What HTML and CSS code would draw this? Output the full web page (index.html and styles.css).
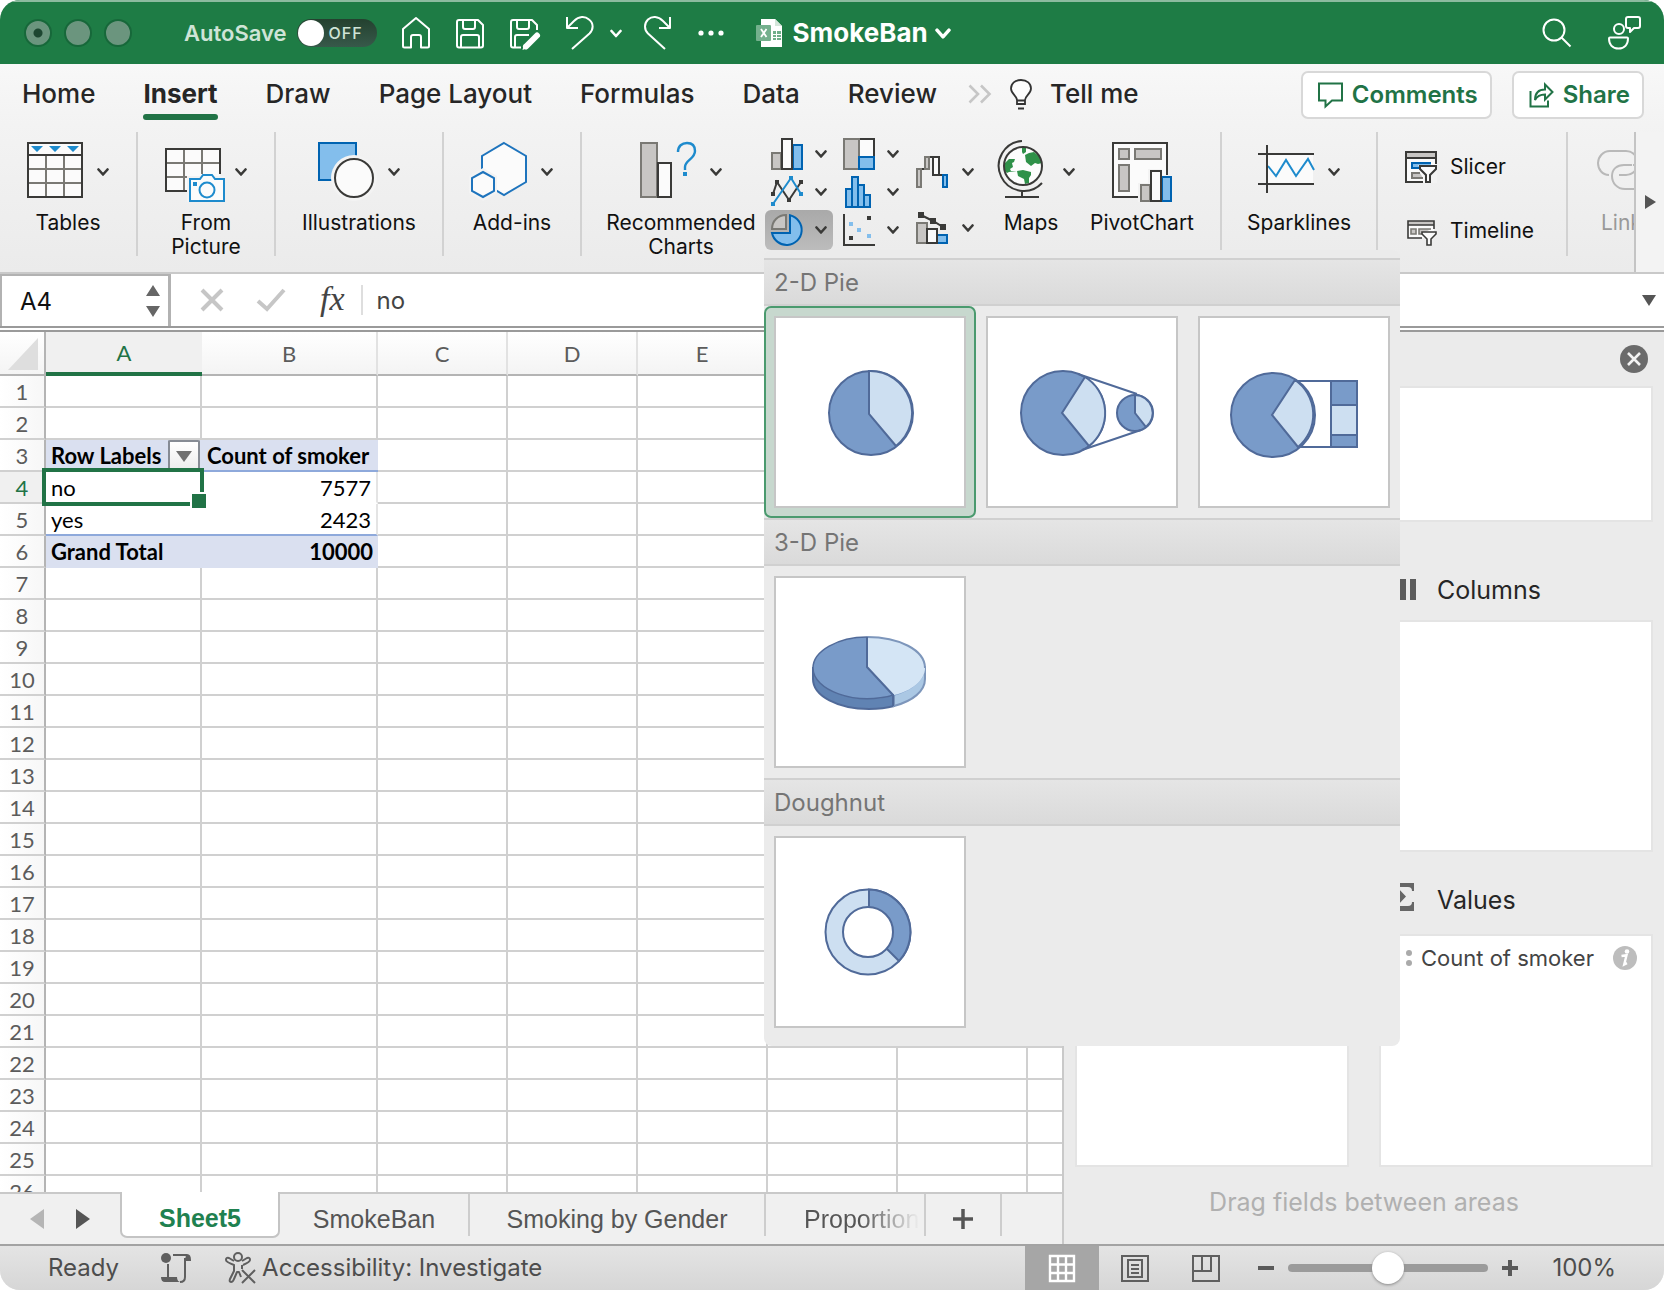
FILE: index.html
```html
<!DOCTYPE html>
<html lang="en">
<head>
<meta charset="utf-8">
<meta name="viewport" content="width=device-width, initial-scale=1">
<title>SmokeBan</title>
<link rel="stylesheet" href="styles.css">
</head>
<body>
<svg class="defs" aria-hidden="true">
  <symbol id="chev" viewBox="0 0 12 8"><path d="M1.500 1.500 6 6.500l4.500-5" fill="none" stroke="currentColor" stroke-width="2.600" stroke-linecap="round" stroke-linejoin="round"/></symbol>
</svg>
<div class="window">
  <header class="titlebar">
    <div class="lights"><span class="light light-edited"></span><span class="light"></span><span class="light"></span></div>
    <label class="autosave">AutoSave
      <span class="switch"><input type="checkbox" role="switch"><span class="switch-text">OFF</span></span>
    </label>
    <div class="quick">
      <button aria-label="Home"><svg width="28" height="32" viewBox="0 0 28 32"><path d="M1 29V12L14 1l13 11v17a1.500 1.500 0 0 1-1.500 1.500H19V20q0-2-2-2h-6q-2 0-2 2v10.500H2.500A1.500 1.500 0 0 1 1 29z"/></svg></button>
      <button aria-label="Save"><svg width="28" height="32" viewBox="0 0 28 32"><path d="M3 3h19l5 5v20.500q0 2-2 2H3q-2 0-2-2V5q0-2 2-2zM7 3v7q0 2 2 2h8q2 0 2-2V3M5 30V20q0-2 2-2h14q2 0 2 2v10"/></svg></button>
      <button aria-label="Save a copy"><svg width="30" height="32" viewBox="0 0 30 32"><path d="M11 30.500H3q-2 0-2-2V5q0-2 2-2h19l5 5v5M7 3v7q0 2 2 2h8q2 0 2-2V3M5 30V20q0-2 2-2h12"/><path d="M16 29.500 27 18.500" stroke-width="6" stroke-linecap="round"/><path d="M12.500 33l1.500-6 4 4z" fill="#fff" stroke="none"/></svg></button>
      <span class="undo">
        <button aria-label="Undo"><svg width="28" height="34" viewBox="0 0 28 34"><path d="M1 1v11h11M1.500 11.500 8 5C13 0 19 0 23 3.500c5 4 4.500 10 .500 14L6 33"/></svg></button>
        <button aria-label="Undo history"><svg class="chev" width="12" height="9"><use href="#chev"/></svg></button>
      </span>
      <button aria-label="Redo"><svg width="28" height="34" viewBox="0 0 28 34"><path d="M26 1v11H15M25.500 11.500 19 5C14 0 8 0 4 3.500c-4 4-4 10 0 14L21 33"/></svg></button>
      <button aria-label="More"><svg width="26" height="6" viewBox="0 0 26 6"><g fill="#fff" stroke="none"><circle cx="3" cy="3" r="2.600"/><circle cx="13" cy="3" r="2.600"/><circle cx="23" cy="3" r="2.600"/></g></svg></button>
    </div>
    <button class="doc">
      <svg width="27" height="30" viewBox="0 0 27 30"><path d="M5 1h14l7 7v21H5z" fill="#fff"/><path d="M19 1v7h7z" fill="#d4e6da"/><path d="M17 13h3v3h-3zm4 0h4v3h-4zm-4 4h3v2h-3zm4 0h4v2h-4zm-4 3h3v2h-3zm4 0h4v2h-4z" fill="#6fae8a"/><rect y="7" width="15" height="16" rx="1" fill="#74b08d"/><path d="m5 11 5.500 8M10.500 11 5 19" stroke="#fff" stroke-width="1.800"/></svg>
      <span>SmokeBan</span>
      <svg class="chev" width="16" height="11"><use href="#chev"/></svg>
    </button>
    <div class="title-tools">
      <button aria-label="Search"><svg width="30" height="30" viewBox="0 0 30 30"><circle cx="12" cy="12" r="10.500"/><path d="m19.500 19.500 9 9"/></svg></button>
      <button aria-label="Feedback"><svg width="34" height="34" viewBox="0 0 34 34"><circle cx="11" cy="13" r="5"/><path d="M1 22.500q0-1 1-1h17q1 0 1 1c0 6-3.500 10-9.500 10S1 28.500 1 22.500zM20 1h10q2 0 2 2v7q0 2-2 2h-4l-4 4v-4h-2q-2 0-2-2V3q0-2 2-2z"/></svg></button>
    </div>
  </header>

  <nav class="tabs">
    <a href="#">Home</a><a href="#" class="current">Insert</a><a href="#">Draw</a><a href="#">Page Layout</a><a href="#">Formulas</a><a href="#">Data</a><a href="#">Review</a>
    <button class="overflow" aria-label="More tabs"><svg width="24" height="20" viewBox="0 0 24 20"><path d="m1.500 1.500 8.500 8.500-8.500 8.500M13 1.500l8.500 8.500L13 18.500" fill="none" stroke="#c6c6c6" stroke-width="2.600"/></svg></button>
    <button class="tell"><svg width="22" height="31" viewBox="0 0 22 31"><path d="M7 21c0-4-6-6-6-11.500C1 4.500 5 1 11 1s10 3.500 10 8.500C21 15 15 17 15 21v4H7zM7 21.500h8" fill="#fdfdfd" stroke="#333" stroke-width="1.800"/><path d="M8 29.500h6" stroke="#333" stroke-width="2"/></svg><span>Tell me</span></button>
    <div class="tab-actions">
      <button class="pill"><svg width="25" height="26" viewBox="0 0 25 26"><path d="M1 1.500h23v17H14l-6.500 6v-6H1z" fill="none" stroke="#217346" stroke-width="2"/></svg>Comments</button>
      <button class="pill"><svg width="25" height="26" viewBox="0 0 25 26"><path d="M1.500 9v15.500H19v-6M6 18c0-7 4-10.500 10-10.500V2.500l7.500 7.500-7.500 7.500V12.500c-5 0-8 1.500-10 5.500z" fill="none" stroke="#217346" stroke-width="2"/></svg>Share</button>
    </div>
  </nav>

  <div class="ribbon">
    <section class="group g-a">
      <button class="big"><span class="pic"><svg width="60" height="60" viewBox="0 0 60 60"><path d="M1 1h54v54H1z" fill="#fbfbfb"/><path d="M19 13v43M37 13v43M1 27h54M1 41h54" stroke="#7a7974" stroke-width="2"/><path d="M1 1h54v54H1zM1 13h54" fill="none" stroke="#3a3a38" stroke-width="2"/><path d="M4 4h12l-6 6zm18 0h12l-6 6zm18 0h12l-6 6z" fill="#1e8bcd"/></svg><svg class="chev" width="12" height="8"><use href="#chev"/></svg></span><span>Tables</span></button>
    </section>
    <section class="group g-b">
      <button class="big"><span class="pic"><svg width="60" height="60" viewBox="0 0 60 60"><path d="M1 7h54v42H1z" fill="#fbfbfb"/><path d="M19 7v42M37 7v25M1 21h54M1 35h22" stroke="#7a7974" stroke-width="2"/><path d="M22 49H1V7h54v25" fill="none" stroke="#3a3a38" stroke-width="2"/><path d="M22 34h38v26H22z" fill="#f3f3f3"/><path d="M25 37h10l3-4h9l3 4h9v22H25z" fill="#fbfbfb" stroke="#1e8bcd" stroke-width="2"/><circle cx="42" cy="48" r="7.500" fill="none" stroke="#1e8bcd" stroke-width="2"/><path d="M28 40h4v4h-4z" fill="#1e8bcd"/></svg><svg class="chev" width="12" height="8"><use href="#chev"/></svg></span><span>From<br>Picture</span></button>
    </section>
    <section class="group g-c">
      <button class="big"><span class="pic"><svg width="60" height="60" viewBox="0 0 60 60"><path d="M1 1h37v37H1z" fill="#83beec" stroke="#0063b1" stroke-width="2"/><circle cx="36" cy="36" r="23" fill="#f3f3f3"/><circle cx="36" cy="36" r="19" fill="#fbfbfb" stroke="#3a3a38" stroke-width="2"/></svg><svg class="chev" width="12" height="8"><use href="#chev"/></svg></span><span>Illustrations</span></button>
    </section>
    <section class="group g-d">
      <button class="big"><span class="pic"><svg width="60" height="60" viewBox="0 0 60 60"><path d="m33 1 22 13v26L33 53 11 40V14z" fill="#fbfbfb" stroke="#1e74bd" stroke-width="2"/><path d="m12 26 14 8v17l-14 8-14-8V34z" fill="#f3f3f3"/><path d="m12 30 11 6v13l-11 6-11-6V36z" fill="#fbfbfb" stroke="#1e74bd" stroke-width="2"/></svg><svg class="chev" width="12" height="8"><use href="#chev"/></svg></span><span>Add-ins</span></button>
    </section>
    <section class="group g-e">
      <button class="big rec"><span class="pic"><svg width="60" height="60" viewBox="0 0 60 60"><path d="M1 1h16v54H1z" fill="#c8c6c4" stroke="#7a7974" stroke-width="2"/><path d="M18 21h13v34H18z" fill="#fbfbfb" stroke="#3a3a38" stroke-width="2"/><path d="M38 10c0-6 4-9 9-9s8 3 8 8c0 8-10 9-10 16v3" fill="none" stroke="#1e8bcd" stroke-width="2.400"/><path d="M43 30h4v4h-4z" fill="#1e8bcd"/></svg><svg class="chev" width="12" height="8"><use href="#chev"/></svg></span><span>Recommended<br>Charts</span></button>
      <div class="charts">
        <button aria-label="Column chart"><svg width="32" height="32" viewBox="0 0 32 32"><path d="M1 15h9v16H1z" fill="#c8c6c4" stroke="#7a7974" stroke-width="2"/><path d="M22 7h9v24h-9z" fill="#83beec" stroke="#0063b1" stroke-width="2"/><path d="M11 1h10v30H11z" fill="#fbfbfb" stroke="#3a3a38" stroke-width="2"/></svg><svg class="chev" width="12" height="8"><use href="#chev"/></svg></button>
        <button aria-label="Hierarchy chart"><svg width="32" height="32" viewBox="0 0 32 32"><path d="M16 1h15v18H16z" fill="#fbfbfb" stroke="#3a3a38" stroke-width="2"/><path d="M1 1h15v30H1z" fill="#c8c6c4" stroke="#7a7974" stroke-width="2"/><path d="M16 19h15v12H16z" fill="#83beec" stroke="#0063b1" stroke-width="2"/></svg><svg class="chev" width="12" height="8"><use href="#chev"/></svg></button>
        <button aria-label="Line chart"><svg width="32" height="32" viewBox="0 0 32 32"><path d="m2 18 4-12 12 18L30 6" fill="none" stroke="#3a3a38" stroke-width="2"/><path d="M0 16h4v4H0zM4 4h4v4H4zm12 18h4v4h-4zM28 4h4v4h-4z" fill="#3a3a38"/><path d="M2 28 20 2l10 16" fill="none" stroke="#1e8bcd" stroke-width="2"/><path d="M0 26h4v4H0zM18 0h4v4h-4zm10 16h4v4h-4z" fill="#1e8bcd"/></svg><svg class="chev" width="12" height="8"><use href="#chev"/></svg></button>
        <button aria-label="Statistical chart"><svg width="32" height="32" viewBox="0 0 32 32"><path d="M3 13h6v18H3zM9 1h6v30H9zm6 8h6v22h-6zm6 10h6v12h-6z" fill="#83beec" stroke="#0063b1" stroke-width="2"/></svg><svg class="chev" width="12" height="8"><use href="#chev"/></svg></button>
        <div class="menu-anchor">
          <button class="pressed" aria-label="Pie chart" aria-expanded="true"><svg width="32" height="32" viewBox="0 0 32 32"><path d="M19 1.300A15 15 0 1 1 1 19h18z" fill="#83beec" stroke="#0063b1" stroke-width="2"/><path d="M15 1v14H1C1 7 7 1 15 1z" fill="#c8c6c4" stroke="#7a7974" stroke-width="2"/></svg><svg class="chev" width="12" height="8"><use href="#chev"/></svg></button>
          <div class="gallery">
            <h3>2-D Pie</h3>
            <div class="tiles">
              <button class="tile chosen" aria-label="Pie"><svg viewBox="0 0 188 188"><circle cx="95" cy="95" r="42" class="dk"/><path d="M93 53a42 42 0 0 1 27 75L93 96z" class="lt"/></svg></button>
              <button class="tile" aria-label="Pie of pie"><svg viewBox="0 0 188 188"><circle cx="75" cy="95" r="42" class="dk"/><path d="M97 59a42 42 0 0 1 4 69L74 95z" class="lt"/><circle cx="147" cy="95" r="18" class="dk"/><path d="M147 77a18 18 0 0 1 11 32l-11-14z" class="lt"/><path d="M90 56 149 76M94 132l59-20" class="ln"/></svg></button>
              <button class="tile" aria-label="Bar of pie"><svg viewBox="0 0 188 188"><circle cx="73" cy="97" r="42" class="dk"/><path d="M95 62a42 42 0 0 1 3 67L72 97z" class="lt"/><path d="M131 63h26v66h-26z" class="dk"/><path d="M131 87h26v30h-26z" class="lt"/><path d="M95 63h36M98 129h33" class="ln"/></svg></button>
            </div>
            <h3>3-D Pie</h3>
            <div class="tiles">
              <button class="tile" aria-label="3-D pie"><svg viewBox="0 0 188 188"><path d="M37 90v11c0 17 25 30 56 30 9 0 18-1 25-3v-14z" fill="#6083b3" stroke="#506a99" stroke-width="2"/><path d="M118 117v11c19-5 31-15 31-27V90z" fill="#abc8e4" stroke="#7d96bb" stroke-width="2"/><ellipse cx="93" cy="90" rx="56" ry="31" fill="#799bc9"/><path d="M91 59c32 0 58 13 58 31 0 12-13 23-31 27L91 89z" fill="#d4e5f5"/><path d="M118 117c-40 11-81-5-81-27 0-17 25-31 54-31" fill="none" stroke="#506a99" stroke-width="1.500"/><path d="M91 59c32 0 58 13 58 31" fill="none" stroke="#7d96bb" stroke-width="2"/><path d="M91 59v30l26 28v11" class="ln"/></svg></button>
            </div>
            <h3>Doughnut</h3>
            <div class="tiles last">
              <button class="tile" aria-label="Doughnut"><svg viewBox="0 0 188 188"><circle cx="92" cy="94" r="42.500" class="lt"/><path d="M93 51.500a42.500 42.500 0 0 1 30 71.500L111 111 93 94z" class="dk"/><circle cx="92" cy="94" r="25" fill="#fff" stroke="#506a99" stroke-width="2"/></svg></button>
            </div>
          </div>
        </div>
        <button aria-label="Scatter chart"><svg width="32" height="32" viewBox="0 0 32 32"><path d="M1 0v31h31" fill="none" stroke="#3a3a38" stroke-width="2"/><path d="M24 2h4v4h-4zM6 22h4v4H6z" fill="#3a3a38"/><path d="M6 8h4v4H6zm8 6h4v4h-4zm10 6h4v4h-4z" fill="#83beec"/></svg><svg class="chev" width="12" height="8"><use href="#chev"/></svg></button>
      </div>
      <div class="charts tall">
        <button aria-label="Waterfall chart"><svg width="32" height="32" viewBox="0 0 32 32"><path d="M5 13h4M13 1h4M23 19h4" stroke="#3a3a38" stroke-width="2"/><path d="M1 13h4v18H1zM9 1h4v12H9z" fill="#c8c6c4" stroke="#7a7974" stroke-width="2"/><path d="M17 1h6v18h-6z" fill="#fbfbfb" stroke="#3a3a38" stroke-width="2"/><path d="M27 19h4v12h-4z" fill="#83beec" stroke="#0063b1" stroke-width="2"/></svg><svg class="chev" width="12" height="8"><use href="#chev"/></svg></button>
        <button aria-label="Combo chart"><svg width="32" height="32" viewBox="0 0 32 32"><path d="M1 11h10v20H1z" fill="#c8c6c4" stroke="#7a7974" stroke-width="2"/><path d="M21 23h10v8H21z" fill="#83beec" stroke="#0063b1" stroke-width="2"/><path d="M11 17h10v14H11z" fill="#fbfbfb" stroke="#3a3a38" stroke-width="2"/><path d="m5 3 12 6 10 6" fill="none" stroke="#3a3a38" stroke-width="2"/><path d="M2 0h6v6H2zm12 6h6v6h-6zm10 6h6v6h-6z" fill="#3a3a38"/></svg><svg class="chev" width="12" height="8"><use href="#chev"/></svg></button>
      </div>
      <button class="big maps"><span class="pic"><svg width="60" height="60" viewBox="0 0 60 60"><circle cx="35" cy="24" r="19" fill="#fdfdfd"/><path d="m34 6 4-1v5l-3 2-1-2zM37 13l4-2 5-1 6 5 2 6-4 1-3-1-4 3-5-4zM17 21l4-4h6l-1 3-2 1 1 4-3 2 1 2 6 0-8 1-2 1-3-3zM29 29l6-1 8 2v3l-2 3v5l-4 1-1-5-6-3z" fill="#2f9149"/><circle cx="35" cy="24" r="19" fill="none" stroke="#3a3a38" stroke-width="2"/><path d="M34-1A25 25 0 1 0 54 41M34 50v5M17 55h34" fill="none" stroke="#3a3a38" stroke-width="2"/></svg><svg class="chev" width="12" height="8"><use href="#chev"/></svg></span><span>Maps</span></button>
      <button class="big pivot"><span class="pic"><svg width="60" height="60" viewBox="0 0 60 60"><path d="M1 1h54v54H1z" fill="#fbfbfb" stroke="#3a3a38" stroke-width="2"/><path d="M7 7h10v10H7zm16 0h26v10H23zM7 23h10v26H7z" fill="#c8c6c4" stroke="#7a7974" stroke-width="2"/><path d="M26 41h10V27h14v6h10v27H26z" fill="#f3f3f3"/><path d="M29 43h9v16h-9z" fill="#c8c6c4" stroke="#7a7974" stroke-width="2"/><path d="M50 35h9v24h-9z" fill="#83beec" stroke="#0063b1" stroke-width="2"/><path d="M39 29h10v30H39z" fill="#fbfbfb" stroke="#3a3a38" stroke-width="2"/></svg></span><span>PivotChart</span></button>
    </section>
    <section class="group g-f">
      <button class="big"><span class="pic"><svg width="60" height="60" viewBox="0 0 60 60"><path d="M10 13h45v29H10z" fill="#fbfbfb"/><path d="m10 24 8 10L28 18l10 16 12-17 6 11" fill="none" stroke="#1e8bcd" stroke-width="2"/><path d="M0 12h56M0 42h56M9 3v48" stroke="#3a3a38" stroke-width="2"/></svg><svg class="chev" width="12" height="8"><use href="#chev"/></svg></span><span>Sparklines</span></button>
    </section>
    <section class="group g-g">
      <button class="wide"><svg width="32" height="32" viewBox="0 0 32 32"><path d="M1 1h30v30H1z" fill="#fbfbfb"/><path d="M1 1h30v6H1z" fill="#c8c6c4"/><path d="M7 12h19v5H7z" fill="#83beec"/><path d="M26 12H7v5h7" fill="none" stroke="#0063b1" stroke-width="2"/><path d="M15 22H7v5h11" fill="#c8c6c4" stroke="#7a7974" stroke-width="2"/><path d="M18 31H1V1h30v12M1 7h30" fill="none" stroke="#3a3a38" stroke-width="2"/><path d="M13 14h19v18H19v-9z" fill="#f3f3f3"/><path d="M15 15h16v3l-6 6v7h-4v-7l-6-6z" fill="#fbfbfb" stroke="#3a3a38" stroke-width="2"/></svg>Slicer</button>
      <button class="wide"><svg width="32" height="32" viewBox="0 0 32 32"><path d="M3 6h26v17H3z" fill="#fbfbfb"/><path d="M3 6h26v4H3z" fill="#c8c6c4"/><path d="M6 14h5v5H6zm11 5h-3v-5h12" fill="#c8c6c4" stroke="#7a7974" stroke-width="1.600"/><path d="M17 23H3V6h26v8M3 10h26" fill="none" stroke="#3a3a38" stroke-width="1.600"/><path d="M18 17h13v2l-5 5v6h-4v-6l-5-5v-2z" fill="#fbfbfb" stroke="#3a3a38" stroke-width="1.600"/></svg>Timeline</button>
    </section>
    <section class="group links">
      <button class="big"><span class="pic"><svg width="60" height="60" viewBox="0 0 60 60"><path d="M12 33C5 33 1 27 1 21S6 9 13 9h16c7 0 12 6 12 12s-5 12-12 12h-7M36 23h8c7 0 11 5 11 11s-5 13-12 13H28c-8 0-13-6-13-13s5-11 12-11h8" fill="none" stroke="#b9b9b9" stroke-width="2"/></svg></span><span>Links</span></button>
    </section>
    <button class="ribbon-next" aria-label="Scroll ribbon"><svg width="12" height="14" viewBox="0 0 12 14"><path d="m1 0 11 7-11 7z" fill="#555"/></svg></button>
  </div>

  <div class="formula">
    <div class="namebox">
      <input aria-label="Name box" value="A4">
      <svg width="14" height="32" viewBox="0 0 14 32"><path d="m7 0 7 11H0zM7 32 0 21h14z" fill="#666"/></svg>
    </div>
    <button aria-label="Cancel"><svg width="24" height="24" viewBox="0 0 24 24"><path d="m2 2 20 20M22 2 2 22" stroke="#c6c6c6" stroke-width="4"/></svg></button>
    <button aria-label="Enter"><svg width="30" height="24" viewBox="0 0 30 24"><path d="m2 13 9 8L28 2" fill="none" stroke="#c6c6c6" stroke-width="4"/></svg></button>
    <button class="fx">fx</button>
    <input class="entry" aria-label="Formula" value="no">
    <button class="expand" aria-label="Expand formula bar"><svg width="14" height="11" viewBox="0 0 14 11"><path d="M0 0h14L7 11z" fill="#555"/></svg></button>
  </div>

  <main class="work">
    <div class="book">
      <div class="grid">
        <table>
          <colgroup><col class="c-n"><col class="c-a"><col class="c-b"><col class="c-x"><col class="c-x"><col class="c-x"><col class="c-x"><col class="c-x"><col class="c-x"></colgroup>
          <thead><tr><th class="corner"><svg width="30" height="32" viewBox="0 0 30 32"><path d="M30 0v32H0z" fill="#dedede"/></svg></th><th class="on">A</th><th>B</th><th>C</th><th>D</th><th>E</th><th></th><th></th><th></th></tr></thead>
          <tbody>
            <tr><th>1</th><td></td><td></td><td></td><td></td><td></td><td></td><td></td><td></td></tr>
            <tr><th>2</th><td></td><td></td><td></td><td></td><td></td><td></td><td></td><td></td></tr>
            <tr class="fill"><th>3</th><td><div class="filter">Row Labels<button aria-label="Filter"><svg width="16" height="11" viewBox="0 0 16 11"><path d="M0 0h16L8 11z" fill="#707070"/></svg></button></div></td><td>Count of smoker</td><td></td><td></td><td></td><td></td><td></td><td></td></tr>
            <tr class="data"><th class="on">4</th><td class="active">no</td><td>7577</td><td></td><td></td><td></td><td></td><td></td><td></td></tr>
            <tr class="data end"><th>5</th><td>yes</td><td>2423</td><td></td><td></td><td></td><td></td><td></td><td></td></tr>
            <tr class="fill total"><th>6</th><td>Grand Total</td><td>10000</td><td></td><td></td><td></td><td></td><td></td><td></td></tr>
            <tr><th>7</th><td></td><td></td><td></td><td></td><td></td><td></td><td></td><td></td></tr>
            <tr><th>8</th><td></td><td></td><td></td><td></td><td></td><td></td><td></td><td></td></tr>
            <tr><th>9</th><td></td><td></td><td></td><td></td><td></td><td></td><td></td><td></td></tr>
            <tr><th>10</th><td></td><td></td><td></td><td></td><td></td><td></td><td></td><td></td></tr>
            <tr><th>11</th><td></td><td></td><td></td><td></td><td></td><td></td><td></td><td></td></tr>
            <tr><th>12</th><td></td><td></td><td></td><td></td><td></td><td></td><td></td><td></td></tr>
            <tr><th>13</th><td></td><td></td><td></td><td></td><td></td><td></td><td></td><td></td></tr>
            <tr><th>14</th><td></td><td></td><td></td><td></td><td></td><td></td><td></td><td></td></tr>
            <tr><th>15</th><td></td><td></td><td></td><td></td><td></td><td></td><td></td><td></td></tr>
            <tr><th>16</th><td></td><td></td><td></td><td></td><td></td><td></td><td></td><td></td></tr>
            <tr><th>17</th><td></td><td></td><td></td><td></td><td></td><td></td><td></td><td></td></tr>
            <tr><th>18</th><td></td><td></td><td></td><td></td><td></td><td></td><td></td><td></td></tr>
            <tr><th>19</th><td></td><td></td><td></td><td></td><td></td><td></td><td></td><td></td></tr>
            <tr><th>20</th><td></td><td></td><td></td><td></td><td></td><td></td><td></td><td></td></tr>
            <tr><th>21</th><td></td><td></td><td></td><td></td><td></td><td></td><td></td><td></td></tr>
            <tr><th>22</th><td></td><td></td><td></td><td></td><td></td><td></td><td></td><td></td></tr>
            <tr><th>23</th><td></td><td></td><td></td><td></td><td></td><td></td><td></td><td></td></tr>
            <tr><th>24</th><td></td><td></td><td></td><td></td><td></td><td></td><td></td><td></td></tr>
            <tr><th>25</th><td></td><td></td><td></td><td></td><td></td><td></td><td></td><td></td></tr>
            <tr><th>26</th><td></td><td></td><td></td><td></td><td></td><td></td><td></td><td></td></tr>
          </tbody>
        </table>
      </div>
      <div class="sheets">
        <div class="arrows">
          <button aria-label="Previous sheet"><svg width="14" height="20" viewBox="0 0 14 20"><path d="M14 0v20L0 10z" fill="#b5b5b5"/></svg></button>
          <button aria-label="Next sheet"><svg width="14" height="20" viewBox="0 0 14 20"><path d="M0 0v20l14-10z" fill="#555"/></svg></button>
        </div>
        <button class="sheet s1 shown">Sheet5</button>
        <button class="sheet s2">SmokeBan</button>
        <button class="sheet s3">Smoking by Gender</button>
        <button class="sheet s4">Proportion</button>
        <button class="sheet s5" aria-label="Add sheet"><svg width="20" height="20" viewBox="0 0 20 20"><path d="M10 0v20M0 10h20" stroke="#555" stroke-width="3.500"/></svg></button>
      </div>
    </div>
    <aside class="pane">
      <div class="pane-top"><button aria-label="Close"><svg width="28" height="28" viewBox="0 0 28 28"><circle cx="14" cy="14" r="14" fill="#6b6b6b"/><path d="m8 8 12 12M20 8 8 20" stroke="#f2f2f2" stroke-width="2.600"/></svg></button></div>
      <div class="box fields"></div>
      <div class="areas">
        <div class="area"><div class="area-head first"></div><div class="box"></div></div>
        <div class="area"><h2 class="area-head first"><svg width="38" height="22" viewBox="0 0 38 22"><path d="M11 0h6v21h-6zm10 0h6v21h-6zm10 0h6v21h-6z" fill="#5c5c5c"/></svg>Columns</h2><div class="box"></div></div>
        <div class="area"><div class="area-head"></div><div class="box"></div></div>
        <div class="area"><h2 class="area-head"><svg width="38" height="28" viewBox="0 0 38 28"><path d="M9 0h26v8h-2q0-4-4-4H18l9 9.500L18 23h11q4 0 4-4h2v9H9v-3l12-11.500L9 3z" fill="#666"/></svg>Values</h2><div class="box">
          <div class="field"><svg width="24" height="16" viewBox="0 0 24 16"><g fill="#aaa"><circle cx="7" cy="3" r="3"/><circle cx="7" cy="13" r="3"/><circle cx="20" cy="3" r="3"/><circle cx="20" cy="13" r="3"/></g></svg><span>Count of smoker</span><button aria-label="Field settings"><svg width="24" height="24" viewBox="0 0 24 24"><circle cx="12" cy="12" r="12" fill="#bdbdbd"/><circle cx="14" cy="5.500" r="2.300" fill="#fff"/><path d="m8.500 10 5-.800-2.300 9.300 2.800-1.300" fill="none" stroke="#fff" stroke-width="2.400"/></svg></button></div>
        </div></div>
      </div>
      <p class="hint">Drag fields between areas</p>
    </aside>
  </main>

  <footer class="status">
    <span class="ready">Ready</span>
    <button aria-label="Record macro"><svg width="30" height="32" viewBox="0 0 30 32"><circle cx="5" cy="6" r="5" fill="#5f5f5f"/><path d="M12 3h14q3 0 3 5h-5M7 12v14" fill="none" stroke="#5f5f5f" stroke-width="2"/><path d="M25 3q4 0 4 5h-5zM0 25h16q0 5 4 5H4q-4 0-4-5z" fill="#5f5f5f"/><path d="M24 6v19q0 5-5 5" fill="none" stroke="#5f5f5f" stroke-width="2"/></svg></button>
    <button class="access"><svg width="31" height="32" viewBox="0 0 31 32"><g fill="none" stroke="#5f5f5f" stroke-width="2" stroke-linejoin="round"><circle cx="13" cy="5" r="4"/><path d="M9 9 4 6Q1 5 1 8q0 2 8 5v6L5 27q-1 3 1 3t3-3l3-7h2l2 5M17 9l5-3q3-1 3 2 0 2-7 5M17 13v4M17 18l13 13M30 18 17 31"/></g></svg>Accessibility: Investigate</button>
    <div class="views">
      <button class="view on" aria-label="Normal"><svg width="26" height="27" viewBox="0 0 26 27"><path d="M1 1h24v25H1zM9 1v25M17 1v25M1 9.500h24M1 18h24" fill="none" stroke="#fff" stroke-width="2.400"/></svg></button>
      <button class="view" aria-label="Page layout"><svg width="28" height="27" viewBox="0 0 28 27"><path d="M1 1h26v25H1zM7 5h14v17H7zM10 10h8M10 14h8M10 18h8" fill="none" stroke="#5f5f5f" stroke-width="2"/></svg></button>
      <button class="view" aria-label="Page break preview"><svg width="28" height="27" viewBox="0 0 28 27"><path d="M1 1h26v25H1zM1 16h18V1M10 1v15" fill="none" stroke="#5f5f5f" stroke-width="2"/></svg></button>
    </div>
    <div class="zoom">
      <button aria-label="Zoom out"><svg width="16" height="16" viewBox="0 0 16 16"><path d="M0 8h16" stroke="#5a5a5a" stroke-width="4"/></svg></button>
      <input type="range" aria-label="Zoom" min="0" max="200" value="100">
      <button aria-label="Zoom in"><svg width="16" height="16" viewBox="0 0 16 16"><path d="M0 8h16M8 0v16" stroke="#5a5a5a" stroke-width="4"/></svg></button>
      <span class="pct">100%</span>
    </div>
  </footer>
</div>
</body>
</html>
```
FILE: styles.css
```css
* { box-sizing: border-box; }
body {
  margin: 0;
  background: #fff;
  color: #262626;
  font-family: Inter, "Liberation Sans", sans-serif;
  font-size: 21px;
  line-height: 24px;
}
button, input { font: inherit; color: inherit; }
button { margin: 0; padding: 0; border: 0; background: none; display: flex; align-items: center; justify-content: center; }
svg { display: block; flex: none; overflow: visible; }
h2, h3, p { margin: 0; font-weight: 400; }
.defs { position: absolute; width: 0; height: 0; }
.window { display: flex; flex-direction: column; height: 100vh; min-height: 700px; border-radius: 20px; overflow: hidden; background: #ebebeb; }

.titlebar { flex: none; display: flex; align-items: center; height: 64px; padding: 0 22px 0 24px; background: #1e7c45; border-top: 2px solid #8cbb9f; color: #fff; }
.titlebar svg { fill: none; stroke: #fff; stroke-width: 2; stroke-linejoin: round; }
.lights { display: flex; gap: 12px; }
.light { width: 28px; height: 28px; border-radius: 50%; border: 2px solid #17683a; background: #6b957e; }
.light-edited { background: radial-gradient(circle, #1d4731 4px, #6b957e 5px); }
.autosave { display: flex; align-items: center; gap: 10px; margin-left: 52px; font-size: 22px; font-weight: 600; color: #cfe4d7; }
.switch { position: relative; display: flex; }
.switch input { appearance: none; margin: 0; width: 80px; height: 28px; border-radius: 14px; background: linear-gradient(#24412f, #37594a); }
.switch input::before { content: ""; display: block; width: 26px; height: 26px; margin: 1px; border-radius: 50%; background: #fff; }
.switch-text { position: absolute; left: 32px; top: 2px; font-size: 16px; font-weight: 500; letter-spacing: 1px; }
.quick { display: flex; align-items: center; gap: 26px; margin-left: 25px; }
.undo { display: flex; align-items: center; gap: 16px; margin-right: -4px; }
.doc { gap: 10px; margin-left: 32px; font-size: 26px; font-weight: 700; }
.doc > svg:first-child { stroke: none; }
.doc .chev { margin-left: -3px; }
.title-tools { display: flex; align-items: center; gap: 36px; margin-left: auto; }

.tabs { flex: none; display: flex; align-items: center; height: 60px; padding: 0 20px 0 22px; background: linear-gradient(#f8f8f8, #f3f3f3); font-size: 26px; font-weight: 500; }
.tabs a { position: relative; margin-right: 48px; color: inherit; text-decoration: none; white-space: nowrap; }
.tabs .current { font-weight: 700; }
.tabs .current::after { content: ""; position: absolute; left: 0; right: 0; bottom: -14px; height: 6px; border-radius: 3px; background: #217346; }
.overflow { margin-left: -17px; }
.tell { gap: 18px; margin-left: 18px; font-weight: 500; white-space: nowrap; }
.tab-actions { display: flex; gap: 20px; margin-left: auto; padding-top: 2px; }
.pill { gap: 9px; height: 48px; padding: 0 12px 0 15px; border: 2px solid #d8d8d8; border-radius: 7px; background: #fff; color: #217346; font-size: 24px; font-weight: 600; }

.ribbon { flex: none; display: flex; padding-top: 8px; background: linear-gradient(#f3f3f3, #ebebeb); border-bottom: 2px solid #c9c9c9; color: #111; }
.group { flex: none; display: flex; align-items: flex-start; justify-content: center; height: 124px; margin-bottom: 16px; border-right: 2px solid #d2d2d2; }
.g-a, .g-b, .g-d { width: 138px; }
.g-c { width: 168px; }
.g-e { width: 640px; justify-content: flex-start; padding-left: 15px; }
.g-f { width: 156px; }
.g-g { width: 190px; flex-direction: column; align-items: flex-start; justify-content: flex-start; padding: 19px 0 0 27px; gap: 32px; }
.big { flex-direction: column; gap: 9px; padding-top: 10px; }
.pic { display: flex; align-items: center; gap: 10px; }
.chev { color: #3a3a38; }
.titlebar .chev { color: #fff; stroke: none; }
.rec, .pivot { flex: none; }
.rec { width: 168px; }
.maps { width: 90px; margin-left: 7px; }
.maps .pic { gap: 15px; }
.pivot { width: 116px; margin-left: 8px; }
.charts { display: grid; grid-template-columns: 68px 68px; grid-template-rows: 40px 36px 40px; column-gap: 4px; padding-top: 2px; }
.charts button { gap: 12px; width: 68px; height: 100%; }
.charts.tall { grid-template-columns: 68px; grid-template-rows: 40px 40px; row-gap: 16px; margin-left: 6px; padding-top: 20px; }
.charts.tall button { gap: 14px; }
.menu-anchor { position: relative; }
.charts .pressed { border-radius: 6px; background: linear-gradient(#a9a9a9, #bcbcbc); }
.wide { gap: 13px; height: 32px; }
.links { flex: 1 1 0; min-width: 0; height: 140px; margin: 0; overflow: hidden; justify-content: flex-start; padding-left: 29px; color: #999; border-color: #c4c4c4; }
.ribbon-next { width: 28px; background: #f3f3f3; }

.gallery { position: absolute; z-index: 10; top: 100%; left: -1px; width: 636px; padding-top: 8px; border-radius: 8px; overflow: hidden; background: #ebebeb; }
.gallery h3 { height: 48px; padding: 2px 10px 0; border: solid #d0d0d0; border-width: 2px 0; background: linear-gradient(#e5e5e5, #dadada); color: #757575; font-size: 24px; line-height: 42px; }
.tiles { display: grid; grid-template-columns: repeat(3, 1fr); }
.tiles.last { padding-bottom: 8px; }
.charts .tile { width: auto; height: 212px; padding: 8px; border: 2px solid transparent; border-radius: 7px; }
.charts .chosen { background: #c7d8ce; border-color: #4a9a6e; }
.tile svg { width: 192px; height: 192px; background: #fff; border: 2px solid #c6c6c6; }
.dk { fill: #799bc9; stroke: #506a99; stroke-width: 2; }
.lt { fill: #cddff1; stroke: #506a99; stroke-width: 2; }
.ln { fill: none; stroke: #506a99; stroke-width: 2; }

.formula { flex: none; display: flex; align-items: center; height: 58px; background: #fff; border-bottom: 6px double #9a9a9a; }
.namebox { flex: none; display: flex; align-items: center; justify-content: space-between; align-self: stretch; width: 171px; margin-right: 29px; padding: 0 8px 0 18px; border: 2px solid #b2b2b2; border-right-width: 3px; border-bottom: 0; font-size: 24px; color: #111; }
.namebox input { width: 90px; padding: 0; border: 0; background: none; }
.formula > button { margin-right: 32px; }
.formula .fx { margin: 0 16px 0 2px; padding-bottom: 2px; font: italic 34px/40px "Liberation Serif", serif; color: #444; }
.entry { flex: 1; min-width: 0; height: 30px; padding: 0 0 0 14px; border: 0; border-left: 2px solid #dedede; font-size: 24px; color: #444; }
.formula > .expand { margin: 0 8px; }

.work { flex: 1; display: flex; min-height: 0; }
.book { flex: 1; min-width: 0; display: flex; flex-direction: column; }
.grid { flex: 1; min-height: 0; overflow: hidden; background: #fff; }
table { table-layout: fixed; width: 1158px; border-collapse: separate; border-spacing: 0; font-family: Lato, "Noto Sans", sans-serif; font-size: 22px; line-height: 28px; color: #000; }
.c-n { width: 46px; } .c-a { width: 156px; } .c-b { width: 176px; } .c-x { width: 130px; }
th, td { height: 32px; padding: 2px 5px 0; border: solid #d0d0d0; border-width: 0 2px 2px 0; overflow: hidden; white-space: nowrap; }
th { padding: 2px 0 0; font-weight: 400; color: #5c5c5c; background: linear-gradient(90deg, #fff, #f7f7f7); border-right-color: #b4b4b4; }
thead th { height: 44px; background: linear-gradient(#fff, #f4f4f4); border-color: #e2e2e2; border-bottom-color: #b4b4b4; }
thead .corner { border-right-color: #b4b4b4; padding-left: 8px; }
thead .on { background: #f0f0f0; border-bottom: 4px solid #217346; border-right: 0; }
.on { color: #217346; background: #f0f0f0; }
.fill td:nth-child(-n+3) { background: #dae0f0; border-color: #dae0f0; border-right-width: 0; border-bottom-color: #8ea9db; font-weight: 700; }
.total td:nth-child(-n+3) { border-bottom-color: #dae0f0; }
.data td:nth-child(2) { border-color: #fff; border-right: 0; }
.data td:nth-child(3) { border-color: #fff #e4e4e4 #fff #fff; }
.data td:nth-child(3), .total td:nth-child(3) { text-align: right; }
.end td:nth-child(2), .end td:nth-child(3) { border-bottom-color: #8ea9db; }
.filter { display: flex; justify-content: space-between; }
.filter button { width: 32px; height: 30px; margin: -2px -3px 0 0; border: 2px solid #868b94; border-bottom: 0; border-radius: 2px; background: linear-gradient(#fff, #ececec); }
.active { position: relative; overflow: visible; }
.active::before { content: ""; position: absolute; inset: -4px -2px -4px -4px; border: 4px solid #217346; }
.active::after { content: ""; position: absolute; z-index: 1; right: -6px; bottom: -8px; width: 14px; height: 14px; border: 2px solid #fff; background: #217346; }

.sheets { flex: none; display: flex; height: 52px; border-top: 2px solid #c9c9c9; background: #f0f0f0; font-family: "Liberation Sans", sans-serif; font-size: 25px; color: #555; }
.arrows { display: flex; gap: 32px; width: 120px; padding: 0 0 0 30px; }
.sheet { height: 42px; padding-top: 8px; border-right: 2px solid #cdcdcd; white-space: nowrap; overflow: hidden; }
.s1 { width: 160px; } .s2 { width: 190px; } .s3 { width: 296px; } .s4 { width: 160px; justify-content: flex-start; padding-left: 38px; } .s5 { width: 76px; }
.s4 { color: transparent; background: linear-gradient(90deg, #555 60%, #eee 97%); background-clip: text; }
.shown { height: 46px; margin-top: -2px; border: 2px solid #c4c4c4; border-top: 0; border-radius: 0 0 7px 7px; background: #fff; color: #1f8150; font-weight: 700; }

.pane { flex: none; width: 602px; display: flex; flex-direction: column; padding: 0 11px; border-left: 2px solid #c9c9c9; background: #ebebeb; }
.pane-top { display: flex; justify-content: flex-end; height: 54px; padding: 13px 5px 0; }
.pane-top button { height: 28px; }
.box { flex: 1; background: #fff; border: 2px solid #e4e4e4; }
.fields { flex: none; height: 136px; }
.areas { flex: 1; display: grid; grid-template-columns: 1fr 1fr; grid-template-rows: 331fr 315fr; column-gap: 30px; }
.area { display: flex; flex-direction: column; }
.area-head { display: flex; align-items: flex-end; gap: 20px; height: 82px; padding-bottom: 18px; font-size: 25px; line-height: 32px; color: #262626; }
.area-head.first { height: 98px; padding-bottom: 14px; }
.area-head svg { margin-bottom: 5px; }
.field { display: flex; align-items: center; height: 44px; padding: 0 14px 0 8px; color: #444; font-size: 22px; }
.field span { margin-left: 8px; }
.field button { margin-left: auto; }
.hint { height: 77px; padding-top: 20px; text-align: center; font-size: 25px; line-height: 30px; color: #b0b0b0; }

.status { flex: none; display: flex; align-items: center; height: 46px; padding-left: 48px; border-top: 2px solid #a3a3a3; background: linear-gradient(#e4e4e4, #d6d6d6); font-size: 24px; color: #4d4d4d; }
.ready { margin-right: 42px; }
.access { gap: 6px; margin-left: 34px; white-space: nowrap; }
.views { display: flex; align-self: stretch; margin-left: auto; }
.view { width: 71px; }
.view.on { width: 74px; background: #a6a6a6; }
.zoom { display: flex; align-items: center; gap: 14px; margin-left: 17px; padding-right: 48px; }
.zoom input { appearance: none; width: 200px; height: 8px; margin: 0; border-radius: 4px; background: #9b9b9b; }
.zoom input::-webkit-slider-thumb { appearance: none; width: 32px; height: 32px; border-radius: 50%; background: #fff; box-shadow: 0 1px 3px #888; }
.pct { margin-left: 20px; }
```
